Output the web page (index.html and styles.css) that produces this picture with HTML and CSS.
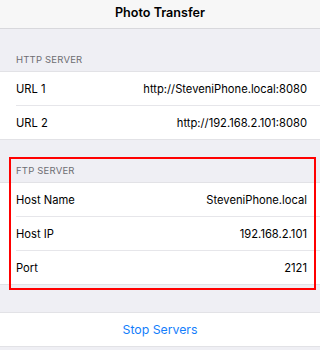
FILE: index.html
```html
<!DOCTYPE html>
<html>
<head>
<meta charset="utf-8">
<link rel="stylesheet" href="styles.css">
</head>
<body>
<header class="nav"><h1 class="title">Photo Transfer</h1></header>
<section class="section">
  <div class="section-header">HTTP SERVER</div>
  <div class="group">
    <div class="row"><span class="label">URL 1</span><span class="value">http://SteveniPhone.local:8080</span></div>
    <div class="row"><span class="label">URL 2</span><span class="value">http://192.168.2.101:8080</span></div>
  </div>
</section>
<section class="section ftp">
  <div class="section-header">FTP SERVER</div>
  <div class="group">
    <div class="row"><span class="label">Host Name</span><span class="value">SteveniPhone.local</span></div>
    <div class="row"><span class="label">Host IP</span><span class="value">192.168.2.101</span></div>
    <div class="row"><span class="label">Port</span><span class="value">2121</span></div>
  </div>
  <div class="highlight"></div>
</section>
<section class="section action">
  <div class="group">
    <div class="row button-row"><span class="button">Stop Servers</span></div>
  </div>
</section>
</body>
</html>
```
FILE: styles.css
```css
html, body {
  margin: 0;
  padding: 0;
}
body {
  background: #efeff4;
  font-family: Inter, "Liberation Sans", sans-serif;
  color: #000;
  width: 320px;
  height: 350px;
  overflow: hidden;
}
.nav {
  height: 28px;
  box-sizing: border-box;
  padding-bottom: 4px;
  background: #f7f7f7;
  border-bottom: 1px solid #d8d8dc;
  display: flex;
  align-items: center;
  justify-content: center;
  height: 29px;
}
.title {
  margin: 0;
  font-size: 12.6px;
  font-weight: 600;
  letter-spacing: 0;
}
.section-header {
  height: 42px;
  box-sizing: border-box;
  padding: 0 16px 6px;
  display: flex;
  align-items: flex-end;
  font-size: 9.5px;
  color: #6d6d72;
  letter-spacing: 0.2px;
}
.group {
  background: #fff;
  border-top: 1px solid #e2e2e6;
  border-bottom: 1px solid #e2e2e6;
}
.row {
  height: 33px;
  margin-left: 16px;
  padding-right: 13px;
  display: flex;
  align-items: center;
  justify-content: space-between;
  font-size: 11.2px;
}
.row + .row {
  border-top: 1px solid #e6e6ea;
}
.ftp {
  position: relative;
}
.highlight {
  position: absolute;
  left: 9px;
  right: 4px;
  top: 17px;
  bottom: -5px;
  border: 2px solid #ff0000;
  pointer-events: none;
}
.action {
  margin-top: 27px;
}
.button-row {
  margin-left: 0;
  padding-right: 0;
  justify-content: center;
}
.button {
  color: #147efb;
  font-size: 12.3px;
}
```
